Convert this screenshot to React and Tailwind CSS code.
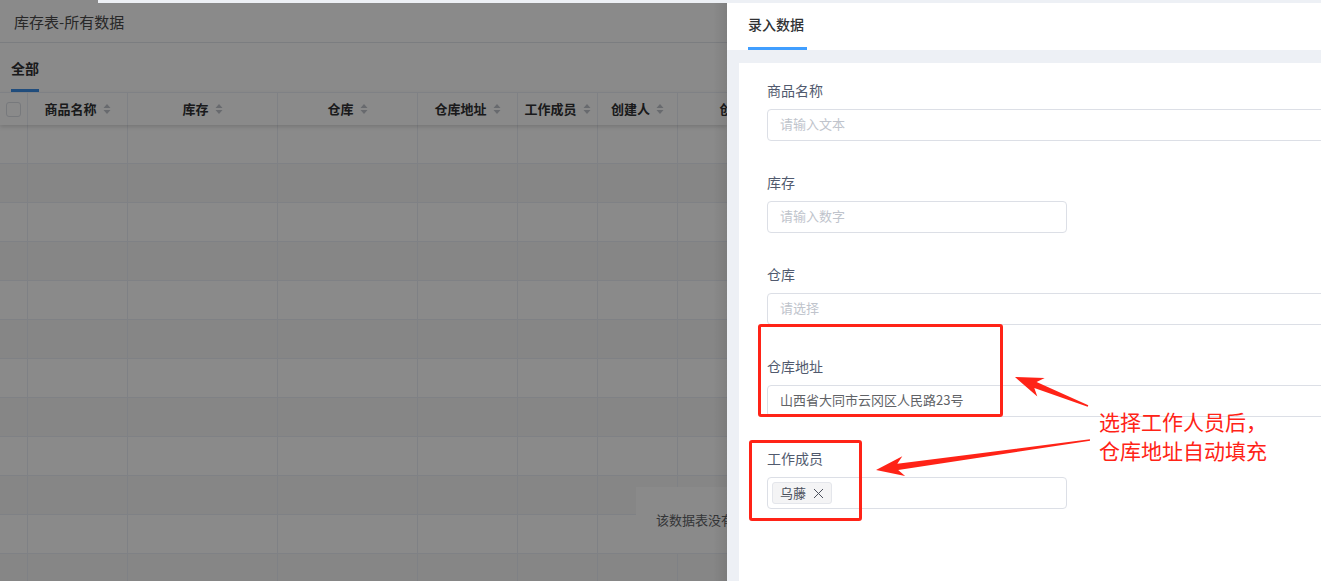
import React from 'react'

const cols = [
  { t: '商品名称', w: 'w-[100px]' },
  { t: '库存', w: 'w-[150px]' },
  { t: '仓库', w: 'w-[140px]' },
  { t: '仓库地址', w: 'w-[100px]' },
  { t: '工作成员', w: 'w-[80px]' },
  { t: '创建人', w: 'w-[80px]' },
  { t: '创建时间', w: 'w-[150px]' },
]

function SortIcon() {
  return (
    <svg width="8" height="12" viewBox="0 0 8 12" className="ml-[6px] shrink-0">
      <path d="M4 1 L7.5 5 L0.5 5 Z" fill="#c0c4cc" />
      <path d="M4 11 L7.5 7 L0.5 7 Z" fill="#c0c4cc" />
    </svg>
  )
}

// tapered annotation arrow, computed from tail -> tip
function arrowPoints(tail, tip) {
  const dx = tip[0] - tail[0]
  const dy = tip[1] - tail[1]
  const len = Math.hypot(dx, dy)
  const u = [dx / len, dy / len]
  const n = [-u[1], u[0]]
  const at = (d, w) => [tip[0] - u[0] * d + n[0] * w, tip[1] - u[1] * d + n[1] * w]
  const pts = [
    at(len, 0.8),
    at(22, 3.2),
    at(28, 10),
    tip,
    at(28, -10),
    at(22, -3.2),
    at(len, -0.8),
  ]
  return pts.map(p => p.map(v => v.toFixed(1)).join(',')).join(' ')
}

function Field({ label, children }) {
  return (
    <div className="mb-[31px]">
      <div className="h-[20px] leading-[20px] text-[14px] text-[#515a6e] mb-[9px]">{label}</div>
      {children}
    </div>
  )
}

function Input({ w, placeholder, value }) {
  return (
    <div className={`${w} h-[32px] rounded-[4px] border border-[#dcdfe6] bg-white flex items-center px-[12px] pb-[3px] text-[13px]`}>
      {value ? <span className="text-[#606266]">{value}</span> : <span className="text-[#c0c4cc]">{placeholder}</span>}
    </div>
  )
}

export default function App() {
  const rows = Array.from({ length: 12 })
  return (
    <div className="relative w-[1321px] h-[581px] overflow-hidden bg-[#edf0f5] font-['Noto_Sans_CJK_SC',sans-serif]">
      <div className="h-[3px] flex">
        <div className="w-[98px] bg-[#8a8a8a]" />
      </div>
      <div className="flex h-[578px]">
        {/* masked list page */}
        <div className="relative w-[727px] shrink-0 overflow-hidden bg-white">
          <div className="h-[40px] flex items-center pl-[14px] text-[15px] text-[#4a4a4a] border-b border-[#e4e7ed]">库存表-所有数据</div>
          <div className="h-[49px] pl-[11px] flex flex-col justify-end">
            <div className="w-[28px] flex flex-col items-center">
              <span className="text-[14px] font-bold text-[#303133] leading-[20px]">全部</span>
              <div className="mt-[11px] h-[3px] w-[28px] bg-[#3d8fe8]" />
            </div>
          </div>
          <div className="relative z-10 flex h-[33px] border-t border-[#ebeef5] bg-white shadow-[0_2px_4px_rgba(0,0,0,0.14)]">
            <div className="w-[28px] shrink-0 flex items-center justify-center border-r border-[#ebeef5]">
              <div className="w-[15px] h-[15px] rounded-[3px] border border-[#dcdfe6] bg-white" />
            </div>
            {cols.map(c => (
              <div key={c.t} className={`${c.w} shrink-0 flex items-center justify-center border-r border-[#ebeef5] text-[13px] font-bold text-[#303133]`}>
                {c.t}
                <SortIcon />
              </div>
            ))}
          </div>
          {rows.map((_, i) => (
            <div key={i} className={`flex h-[39px] border-b border-[#ebeef5] ${i % 2 ? 'bg-[#f7f7f7]' : 'bg-white'}`}>
              <div className="w-[28px] shrink-0 border-r border-[#ebeef5]" />
              {cols.map(c => (
                <div key={c.t} className={`${c.w} shrink-0 border-r border-[#ebeef5]`} />
              ))}
            </div>
          ))}
          <div className="absolute left-[636px] top-[484px] w-[220px] h-[66px] bg-white flex items-center pl-[20px] text-[13px] text-[#606266]">
            该数据表没有数据
          </div>
          <div className="absolute inset-0 z-20 bg-black/[0.46]" />
          <div className="absolute right-0 top-0 bottom-0 w-[14px] z-30 bg-gradient-to-r from-transparent to-black/[0.08]" />
        </div>

        {/* drawer */}
        <div className="flex-1 flex flex-col bg-[#edf0f5]">
          <div className="h-[47px] bg-white pl-[21px] flex items-end">
            <div className="flex flex-col">
              <span className="text-[14px] font-medium text-[#303133] leading-[20px]">录入数据</span>
              <div className="mt-[13px] h-[3px] w-[59px] bg-[#409eff]" />
            </div>
          </div>
          <div className="flex-1 pt-[13px] pl-[12px]">
            <div className="h-full bg-white pl-[28px] pt-[17px]">
              <Field label="商品名称"><Input w="w-[600px]" placeholder="请输入文本" /></Field>
              <Field label="库存"><Input w="w-[300px]" placeholder="请输入数字" /></Field>
              <Field label="仓库"><Input w="w-[600px]" placeholder="请选择" /></Field>
              <Field label="仓库地址"><Input w="w-[600px]" value="山西省大同市云冈区人民路23号" /></Field>
              <Field label="工作成员">
                <div className="w-[300px] h-[32px] rounded-[4px] border border-[#dcdfe6] bg-white flex items-center px-[4px]">
                  <div className="h-[22px] flex items-center gap-[7px] px-[7px] rounded-[3px] bg-[#f4f4f5] border border-[#e4e6eb] text-[13px] text-[#4b505c]">
                    乌藤
                    <svg width="11" height="11" viewBox="0 0 11 11"><path d="M1 1 L10 10 M10 1 L1 10" stroke="#4b505c" strokeWidth="1" /></svg>
                  </div>
                </div>
              </Field>
            </div>
          </div>
        </div>
      </div>

      {/* annotations */}
      <div className="absolute left-[758px] top-[324px] w-[245px] h-[93px] border-[3px] border-[#ff2317] rounded-[3px]" />
      <div className="absolute left-[749px] top-[440px] w-[113px] h-[81px] border-[3px] border-[#ff2317] rounded-[3px]" />
      <svg className="absolute left-0 top-0 pointer-events-none" width="1321" height="581">
        <polygon points={arrowPoints([1088, 406], [1015, 377])} fill="#ff2317" />
        <polygon points={arrowPoints([1090, 440], [876, 470])} fill="#ff2317" />
      </svg>
      <div className="absolute left-[1099px] top-[407px] text-[21px] leading-[29px] text-[#ff2317]">
        <div>选择工作人员后，</div>
        <div>仓库地址自动填充</div>
      </div>
    </div>
  )
}
